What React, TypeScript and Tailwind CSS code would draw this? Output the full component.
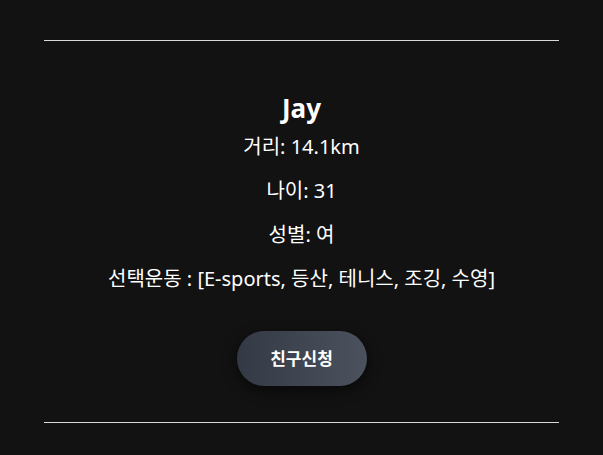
export default function App() {
  const rows = [
    '거리: 14.1km',
    '나이: 31',
    '성별: 여',
    '선택운동 : [E-sports, 등산, 테니스, 조깅, 수영]',
  ]

  return (
    <div
      className="min-h-[455px] w-full bg-[#121212] px-[44px] pt-[40px] text-white"
      style={{ fontFamily: '"Noto Sans", "Noto Sans CJK KR", sans-serif' }}
    >
      <hr className="border-0 border-t border-[#d9d9d9]" />

      {/* Profile card */}
      <div className="flex flex-col items-center pt-[51px]">
        <h2 className="text-[26px] font-bold leading-[32px]">Jay</h2>
        <div className="mt-[9px] flex flex-col items-center gap-[16px]">
          {rows.map((row) => (
            <p key={row} className="text-[20px] leading-[28px]">
              {row}
            </p>
          ))}
        </div>
        <button className="mt-[38px] h-[55px] w-[130px] rounded-full bg-gradient-to-r from-[#343a45] to-[#4b525e] text-[17px] font-bold shadow-[0_4px_14px_rgba(0,0,0,0.6)]">
          친구신청
        </button>
      </div>

      <hr className="mt-[36px] border-0 border-t border-[#d9d9d9]" />
    </div>
  )
}
